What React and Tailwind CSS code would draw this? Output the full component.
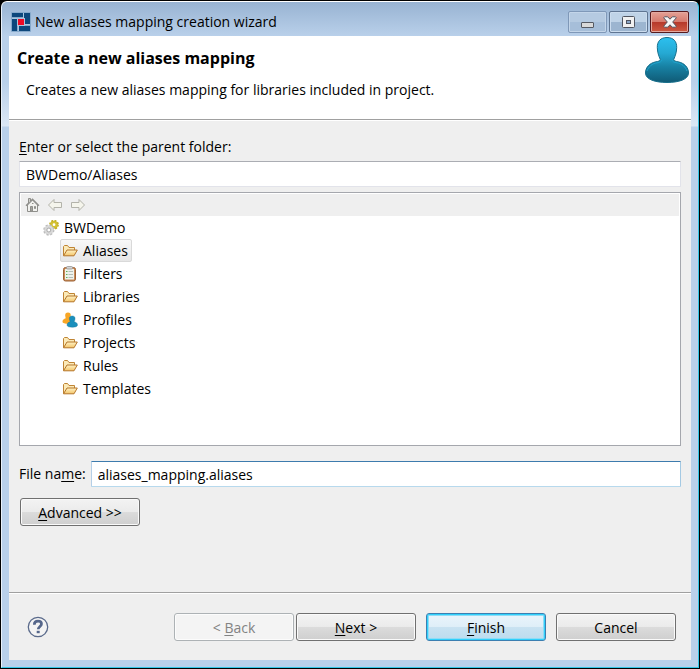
import React from "react";

const svgProps = { "aria-hidden": true, className: "shrink-0" };

function AppLogo() {
  return (
    <svg {...svgProps} width="20" height="20" viewBox="0 0 20 20">
      <rect width="20" height="20" rx="1" fill="#86a9cb" />
      <path d="M1 1h11v4H1zM13 1h6v11h-5V6h-1zM1 7h5v12H1zM8 14h11v5H8zM6 7h1v5H6zM13 12h1v1h-1z" fill="#0d477c" />
      <path d="M12 1h1v5h-1zM14 12h5v1h-5zM7 14h1v5H7zM1 6h5v1H1z" fill="#a9c6e0" />
      <rect x="6" y="6" width="8" height="8" fill="#a9c3dc" />
      <rect x="7" y="7" width="6" height="6" fill="#ee0a25" />
    </svg>
  );
}

function PersonIcon() {
  return (
    <svg {...svgProps} width="46" height="48" viewBox="0 0 46 48">
      <defs>
        <linearGradient id="person" x1="0" y1="0" x2="0" y2="1">
          <stop offset="0" stopColor="#2cc0ef" />
          <stop offset="0.35" stopColor="#25a9d3" />
          <stop offset="0.65" stopColor="#1781a3" />
          <stop offset="1" stopColor="#105a75" />
        </linearGradient>
      </defs>
      <path
        d="M23 1.500c6.500 0 9.900 4 9.700 10-.1 5-1.500 8.500-3 12 .2 1.500 1.800 1.800 4.300 2.300C40.500 27 44.500 31.500 44.500 37c0 6.500-10 9.500-21.500 9.500S1.500 43.500 1.500 37C1.500 31.500 5.500 27 12 25.800c2.500-.5 4.100-.8 4.300-2.300-1.500-3.500-2.900-7-3-12-.2-6 3.200-10 9.700-10z"
        fill="url(#person)"
        stroke="#176f8c"
      />
      <path d="M3 35c1.500-4 5-7.500 10-8.200 3-.4 4.800-1.300 4.900-3M43 35c-1.500-4-5-7.500-10-8.200-3-.4-4.800-1.300-4.900-3" fill="none" stroke="#1fa3cc" strokeWidth="1" />
    </svg>
  );
}

function HomeIcon() {
  return (
    <svg {...svgProps} width="15" height="16" viewBox="0 0 15 16" fill="none" stroke="#8f8f8b">
      <path d="M2.500 8v6.500h10V8L7.500 3z" fill="#f1f1ee" />
      <path d="M1 8.700L7.500 2.200 14 8.700" strokeWidth="1.300" />
      <path d="M3.500 6V1.500h2V4" fill="#cfcfca" />
      <path d="M5.500 14V9.500h2V14zM9.500 9.500h1v2h-1zM7 6.500h1.500" fill="#a5a5a0" />
    </svg>
  );
}

function ArrowIcon({ forward }) {
  return (
    <svg {...svgProps} width="16" height="14" viewBox="0 0 16 14">
      <path
        d={forward ? "M14.500 7L9 1.500v3H1.500v5H9v3z" : "M1.500 7L7 1.500v3h7.500v5H7v3z"}
        fill="#f5f5ec"
        stroke="#b3b3aa"
        strokeLinejoin="round"
      />
    </svg>
  );
}

function GearsIcon() {
  return (
    <svg {...svgProps} width="16" height="16" viewBox="0 0 16 16" fill="none">
      <circle cx="11" cy="4.700" r="2.700" stroke="#d3c032" strokeWidth="2.600" />
      <circle cx="11" cy="4.700" r="4.200" stroke="#c3ad20" strokeWidth="1.400" strokeDasharray="1.900 1.400" />
      <circle cx="5.800" cy="10" r="3.200" fill="#fff" stroke="#d8d8d8" strokeWidth="3.200" />
      <circle cx="5.800" cy="10" r="5" stroke="#bcbcbc" strokeWidth="1.300" strokeDasharray="2.200 1.730" />
      <circle cx="5.800" cy="10" r="2" stroke="#a9a9a9" strokeWidth="0.900" />
    </svg>
  );
}

function FolderIcon() {
  return (
    <svg {...svgProps} width="16" height="16" viewBox="0 0 16 16">
      <defs>
        <linearGradient id="folder" x1="0" y1="0" x2="0" y2="1">
          <stop offset="0" stopColor="#fff3c6" />
          <stop offset="1" stopColor="#f3c468" />
        </linearGradient>
      </defs>
      <path d="M1.500 12.500v-9l1-1h3l1.500 2h5.500v3" fill="#fbeab8" stroke="#bf8434" strokeLinejoin="round" />
      <path d="M1.500 12.800L5 7h10.300L12 12.800z" fill="url(#folder)" stroke="#b5762a" strokeLinejoin="round" />
    </svg>
  );
}

function ClipboardIcon() {
  return (
    <svg {...svgProps} width="16" height="16" viewBox="0 0 16 16">
      <rect x="1.500" y="1.500" width="12" height="13.500" rx="2" fill="#c98b58" stroke="#9c6235" />
      <rect x="3" y="3" width="9" height="10.500" fill="#eef2ec" />
      <rect x="4.500" y="0.500" width="6" height="2.500" rx="1" fill="#d5d5d5" stroke="#969696" strokeWidth="0.800" />
      <path d="M6.500 5.500h4.500M6.500 8.500h4.500M6.500 11.500h4.500" stroke="#b4bdb7" />
      <path d="M4 5.500h1.500M4 8.500h1.500M4 11.500h1.500" stroke="#63b356" strokeWidth="1.200" />
    </svg>
  );
}

function ProfilesIcon() {
  return (
    <svg {...svgProps} width="16" height="16" viewBox="0 0 16 16">
      <path d="M6 .5c2 0 2.900 1.300 2.700 3-.1 1.300-.6 2-.8 2.800 1.500.5 3 1.400 3 3.400 0 1.500-2.500 2-5 2S.5 11.200.5 9.700c0-2 1.500-2.900 3.200-3.400C3.500 5.500 3.300 4.700 3.200 3.500 3.100 1.800 4 .5 6 .5z" fill="#f7a626" />
      <path d="M10.200 4c2.200 0 3 1.300 2.800 3-.1 1.300-.6 2-.8 2.800 1.700.4 3.300 1.400 3.300 3.200 0 1.700-2.600 2.200-5.300 2.200S5 14.700 5 13c0-1.800 1.500-2.800 3.200-3.200C8 9 7.500 8.300 7.400 7 7.200 5.300 8 4 10.200 4z" fill="#1b8fbc" stroke="#167394" strokeWidth="0.400" />
    </svg>
  );
}

function HelpIcon() {
  return (
    <svg {...svgProps} width="22" height="22" viewBox="0 0 22 22" fill="none">
      <circle cx="11" cy="11" r="9.700" fill="#f4f4f4" stroke="#5a6a8b" strokeWidth="1.300" />
      <path d="M7.300 8.700C7.300 6.300 8.800 5.200 11 5.200s3.500 1 3.500 2.800c0 2.300-3.300 2.600-3.300 5.300" stroke="#56678b" strokeWidth="2.700" />
      <rect x="9.700" y="14.800" width="3" height="2.400" fill="#56678b" />
    </svg>
  );
}

const tree = [
  { name: "Aliases", Icon: FolderIcon, selected: true },
  { name: "Filters", Icon: ClipboardIcon },
  { name: "Libraries", Icon: FolderIcon },
  { name: "Profiles", Icon: ProfilesIcon },
  { name: "Projects", Icon: FolderIcon },
  { name: "Rules", Icon: FolderIcon },
  { name: "Templates", Icon: FolderIcon },
];

const raised =
  "border-[#707070] bg-[linear-gradient(#f3f3f3_0%,#ebebeb_48%,#dbdbdb_52%,#cfcfcf_100%)] shadow-[inset_0_0_0_1px_#fafafa]";
const buttonKinds = {
  normal: raised,
  disabled: "border-[#adb2b5] bg-[#f4f4f4] text-[#838383] shadow-[inset_0_0_0_1px_#fcfcfc]",
  primary:
    "border-[#3c7fb1] bg-[linear-gradient(#eaf4fb_0%,#dfeff8_48%,#c8e2f1_52%,#bcdcee_100%)] shadow-[inset_0_0_0_1px_#2fd0fb,inset_0_0_0_2px_#8fdcf6]",
};

function Button({ kind = "normal", children }) {
  return (
    <button
      type="button"
      disabled={kind === "disabled"}
      className={`h-[28px] w-[120px] shrink-0 rounded-[3px] border pt-[2px] ${buttonKinds[kind]}`}
    >
      {children}
    </button>
  );
}

function Key({ children }) {
  return <span className="underline decoration-1 underline-offset-2">{children}</span>;
}

const caption = "flex h-[22px] w-[39px] items-center justify-center rounded-[2px] border";

function TitleBar() {
  return (
    <div className="flex h-[34px] shrink-0 items-center pt-[6px] pl-[2px]">
      <AppLogo />
      <h1 className="ml-1 flex-1 truncate">New aliases mapping creation wizard</h1>
      <div className="flex gap-[2px] pr-[2px]">
        <button type="button" aria-label="Minimize" className={`${caption} border-[#7f98b8] bg-[linear-gradient(#b5cae1_50%,#a6bed9_50%)] shadow-[inset_0_0_0_1px_#c3d5e9]`}>
          <svg {...svgProps} width="13" height="14" viewBox="0 0 13 14">
            <rect x="0.500" y="7.500" width="12" height="5" rx="0.500" fill="#d9d9d9" stroke="#565a63" />
          </svg>
        </button>
        <button type="button" aria-label="Maximize" className={`${caption} border-[#5f7592] bg-[linear-gradient(#bfd3e7_50%,#9cb5d0_50%)] shadow-[inset_0_0_0_1px_#cbdcee]`}>
          <svg {...svgProps} width="13" height="12" viewBox="0 0 13 12">
            <rect x="0.500" y="0.500" width="12" height="11" rx="1" fill="#f1f1f1" stroke="#50545f" />
            <rect x="4.500" y="4.500" width="4" height="3" fill="#8ba6c6" stroke="#50545f" />
          </svg>
        </button>
        <button type="button" aria-label="Close" className={`${caption} border-[#561a1e] bg-[linear-gradient(#e4a196_0%,#d5796c_50%,#b5382a_50%,#cf5b43_100%)] shadow-[inset_0_0_0_1px_#e3a9a0]`}>
          <svg {...svgProps} width="14" height="12" viewBox="0 0 14 12">
            <path
              d="M1.500 .8h3.200L7 3.200 9.300.8h3.200l.8 1L9.700 6l3.600 4.200-.8 1H9.300L7 8.800l-2.300 2.400H1.500l-.8-1L4.300 6 .7 1.800z"
              fill="#f6f6f6"
              stroke="#53545f"
              strokeLinejoin="round"
            />
          </svg>
        </button>
      </div>
    </div>
  );
}

export default function App() {
  return (
    <div className="flex min-h-screen bg-black font-['Open_Sans','Noto_Sans',sans-serif] text-[14px] leading-5 text-black">
      <div className="m-px flex flex-1 flex-col rounded-t-[6px] border border-t-white border-r-[#35c6e6] border-b-[#35c6e6] border-l-[#e9f1fa] bg-[linear-gradient(#98b3d2_0px,#b9d0ea_34px,#b9d0ea_80px,#dbe7f5_124px,#b9d0ea_125px)] px-[7px] pb-[7px]">
        <TitleBar />
        <main className="flex flex-1 flex-col bg-[#efefef]">
          <header className="flex h-[85px] shrink-0 border-b border-white bg-white">
            <div className="flex flex-1 border-b border-[#a0a0a0]">
              <div className="flex-1 pt-3 pl-2">
                <h2 className="text-[16px] font-bold">Create a new aliases mapping</h2>
                <p className="mt-3 pl-[9px]">Creates a new aliases mapping for libraries included in project.</p>
              </div>
              <div className="pr-px">
                <PersonIcon />
              </div>
            </div>
          </header>

          <form className="flex flex-1 flex-col px-[10px] pt-4" onSubmit={(e) => e.preventDefault()}>
            <label htmlFor="parent">
              <Key>E</Key>nter or select the parent folder:
            </label>
            <input
              id="parent"
              defaultValue="BWDemo/Aliases"
              className="mt-1 h-[26px] w-full rounded-[1px] border border-[#e2e3ea] border-t-[#abadb3] bg-white px-[6px] outline-none"
            />
            <div className="mt-[5px] h-[254px] border border-[#a5a7ad] bg-white p-px">
              <div className="flex h-[22px] items-center gap-[7px] bg-[#efefef] pl-1">
                <button type="button" aria-label="Home"><HomeIcon /></button>
                <button type="button" aria-label="Go back"><ArrowIcon /></button>
                <button type="button" aria-label="Go into"><ArrowIcon forward /></button>
              </div>
              <ul className="pl-[22px]">
                <li>
                  <div className="flex h-[23px] items-center gap-[5px]">
                    <GearsIcon />
                    BWDemo
                  </div>
                  <ul className="pl-[17px]">
                    {tree.map(({ name, Icon, selected }) => (
                      <li key={name} className="flex h-[23px]">
                        <button
                          type="button"
                          className={`flex items-center gap-[5px] rounded-[2px] border pr-[3px] pl-px ${
                            selected ? "border-[#d9d9d9] bg-[linear-gradient(#f8f8f8,#e6e6e6)]" : "border-transparent"
                          }`}
                        >
                          <Icon />
                          {name}
                        </button>
                      </li>
                    ))}
                  </ul>
                </li>
              </ul>
            </div>
            <div className="mt-[15px] flex items-center gap-[5px]">
              <label htmlFor="file" className="shrink-0">
                File na<Key>m</Key>e:
              </label>
              <input
                id="file"
                defaultValue="aliases_mapping.aliases"
                className="h-[26px] min-w-0 flex-1 rounded-[1px] border border-t-[#3d7bad] border-r-[#a4c9e3] border-b-[#b7d9ed] border-l-[#b5cfe7] bg-white px-[6px] outline-none"
              />
            </div>
            <div className="mt-[11px] pb-4 pl-px">
              <Button>
                <Key>A</Key>dvanced &gt;&gt;
              </Button>
            </div>
          </form>

          <footer className="border-t border-[#a0a0a0]">
            <div className="flex h-[67px] items-center border-t border-white pr-[15px] pl-[18px]">
              <button type="button" aria-label="Help"><HelpIcon /></button>
              <div className="ml-auto flex gap-[10px]">
                <div className="flex gap-[2px]">
                  <Button kind="disabled">&lt; <Key>B</Key>ack</Button>
                  <Button><Key>N</Key>ext &gt;</Button>
                </div>
                <Button kind="primary"><Key>F</Key>inish</Button>
                <Button>Cancel</Button>
              </div>
            </div>
          </footer>
        </main>
      </div>
    </div>
  );
}
